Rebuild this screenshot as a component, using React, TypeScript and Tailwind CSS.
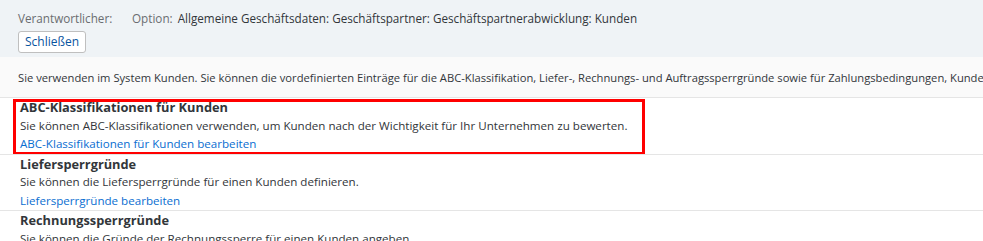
import React from "react";

const font = { fontFamily: '"Open Sans", "Noto Sans", Arial, sans-serif' };

function Row({
  title,
  desc,
  link,
  highlight,
}: {
  title: string;
  desc: string;
  link?: string;
  highlight?: boolean;
}) {
  return (
    <div className="relative border-t border-[#e5e5e5] bg-white pl-[20px] text-[11.6px] leading-[18.5px]">
      <div className="text-[12.8px] font-bold text-[#32363a]">{title}</div>
      <div className="text-[#32363a]">{desc}</div>
      {link && <div className="text-[#0a6ed1]">{link}</div>}
      {highlight && (
        <div className="pointer-events-none absolute left-[13px] top-[1px] h-[56px] w-[632px] border-[3px] border-[#ff0000]" />
      )}
    </div>
  );
}

export default function App() {
  return (
    <div className="h-[241px] w-[983px] overflow-hidden bg-white" style={font}>
      <div className="h-[57px] bg-[#eff3f6] pl-[18px] pt-[9px] text-[11.7px]">
        <div className="flex h-[18px] items-center leading-[18px]">
          <span className="w-[114px] text-[#6a6d70]">Verantwortlicher:</span>
          <span className="text-[#6a6d70]">Option:</span>
          <span className="ml-[5px] text-[#32363a]">
            Allgemeine Geschäftsdaten: Geschäftspartner: Geschäftspartnerabwicklung: Kunden
          </span>
        </div>
        <button className="mt-[4px] h-[22px] rounded-[3px] border border-[#bfbfbf] bg-white px-[6px] text-[12px] leading-[20px] text-[#0854a0]">
          Schließen
        </button>
      </div>
      <div className="h-[40px] overflow-hidden whitespace-nowrap bg-[#fafafa] pl-[18px] pt-[12px] text-[11.2px] leading-[18px] text-[#32363a]">
        Sie verwenden im System Kunden. Sie können die vordefinierten Einträge für die ABC-Klassifikation, Liefer-, Rechnungs- und Auftragssperrgründe sowie für Zahlungsbedingungen, Kundengruppen und Verkaufsbereiche bearbeiten.
      </div>
      <Row
        highlight
        title="ABC-Klassifikationen für Kunden"
        desc="Sie können ABC-Klassifikationen verwenden, um Kunden nach der Wichtigkeit für Ihr Unternehmen zu bewerten."
        link="ABC-Klassifikationen für Kunden bearbeiten"
      />
      <Row
        title="Liefersperrgründe"
        desc="Sie können die Liefersperrgründe für einen Kunden definieren."
        link="Liefersperrgründe bearbeiten"
      />
      <Row
        title="Rechnungssperrgründe"
        desc="Sie können die Gründe der Rechnungssperre für einen Kunden angeben."
      />
    </div>
  );
}
